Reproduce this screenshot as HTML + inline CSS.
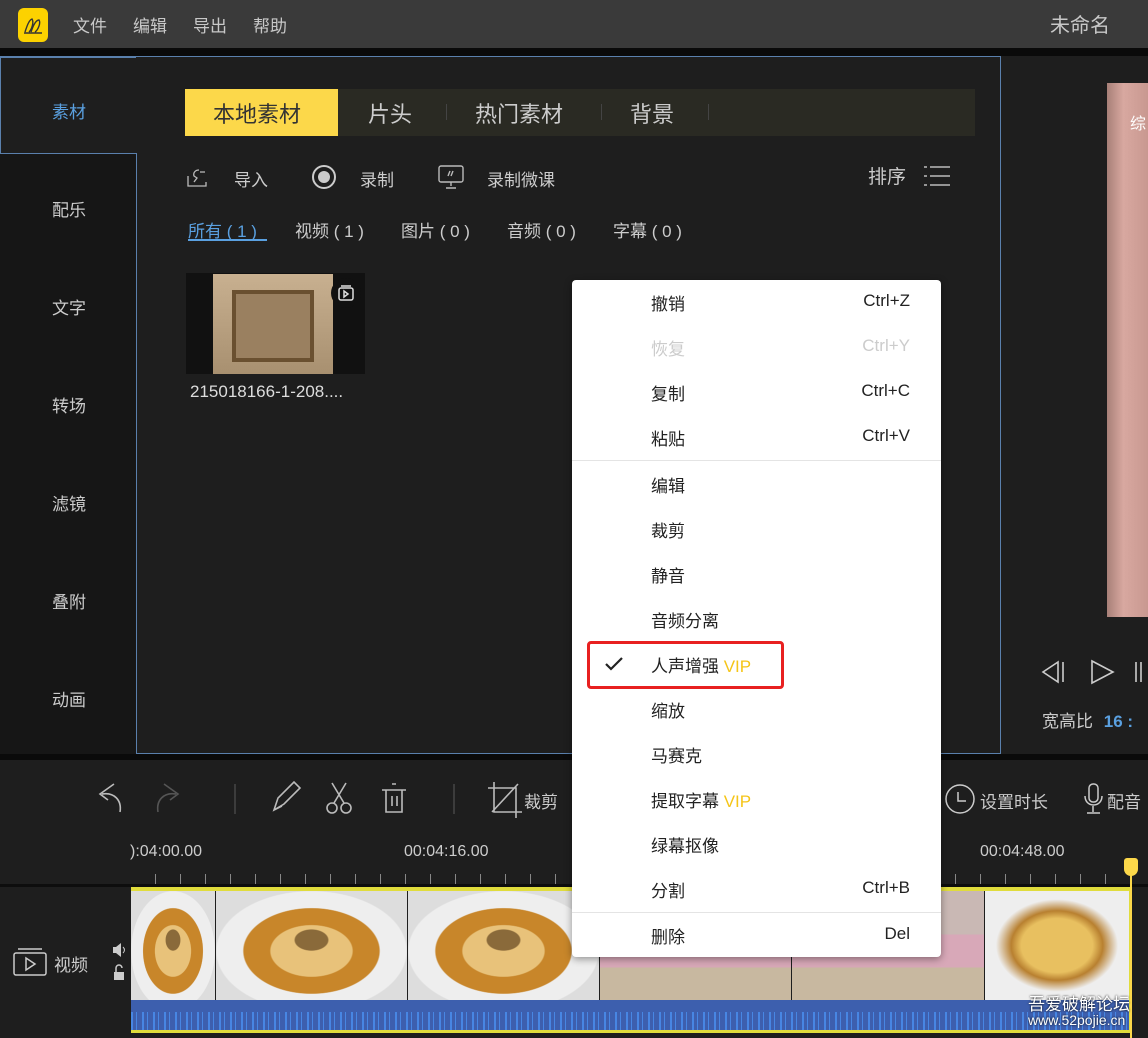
<!DOCTYPE html>
<html><head><meta charset="utf-8"><style>
*{margin:0;padding:0;box-sizing:border-box}
body{width:1148px;height:1038px;overflow:hidden;background:#1e1e1e;font-family:"Liberation Sans","Noto Sans CJK SC",sans-serif;position:relative;color:#ccc}
.a{position:absolute}
.t{position:absolute;white-space:nowrap}
.mi{position:absolute;left:651px;font-size:17px;color:#222}
.sc{position:absolute;right:238px;font-size:17px;color:#222}
.food{background:radial-gradient(ellipse at 50% 45%,#8a6a3a 0 12%,transparent 13%),radial-gradient(ellipse at 50% 55%,#e8c27a 0 30%,#c8862a 31% 50%,#eee 51% 70%,#ddd 71%);}
.ppl{background:linear-gradient(180deg,#c9b8b4 0 40%,#d8a8b8 40% 70%,#c8b8a0 70%);}
</style></head><body>
<div class="a" style="left:0;top:0;width:1148px;height:48px;background:#3a3a3a"></div>
<div class="a" style="left:0;top:48px;width:1148px;height:8px;background:#0a0a0a"></div>
<div class="a" style="left:18px;top:8px;width:30px;height:34px;background:#fcd200;border-radius:6px"></div>
<svg class="a" style="left:22px;top:14px" width="22" height="22" viewBox="0 0 22 22" fill="none" stroke="#333" stroke-width="1.4"><path d="M3 18c2-6 4-12 7-13 2 3 0 10-3 13M9 18c2-6 5-12 8-12 2 3-1 10-4 12M2 19h18"/></svg>
<div class="t" style="left:73px;top:12px;font-size:17px;color:#c8c8c8">文件</div>
<div class="t" style="left:133px;top:12px;font-size:17px;color:#c8c8c8">编辑</div>
<div class="t" style="left:193px;top:12px;font-size:17px;color:#c8c8c8">导出</div>
<div class="t" style="left:253px;top:12px;font-size:17px;color:#c8c8c8">帮助</div>
<div class="t" style="left:1050px;top:9px;font-size:20px;color:#c8c8c8">未命名</div>
<div class="a" style="left:0;top:56px;width:137px;height:698px;background:#161616"></div>
<div class="a" style="left:0;top:57px;width:137px;height:97px;background:#1e1e1e;border:1px solid #5a80ad;border-right:none"></div>
<div class="t" style="left:52px;top:98px;font-size:17px;color:#5aa0e0">素材</div>
<div class="t" style="left:52px;top:196px;font-size:17px;color:#ccc">配乐</div>
<div class="t" style="left:52px;top:294px;font-size:17px;color:#ccc">文字</div>
<div class="t" style="left:52px;top:392px;font-size:17px;color:#ccc">转场</div>
<div class="t" style="left:52px;top:490px;font-size:17px;color:#ccc">滤镜</div>
<div class="t" style="left:52px;top:588px;font-size:17px;color:#ccc">叠附</div>
<div class="t" style="left:52px;top:686px;font-size:17px;color:#ccc">动画</div>
<div class="a" style="left:136px;top:56px;width:865px;height:698px;background:#1e1e1e;border:1px solid #5a80ad;border-left:none"></div>
<div class="a" style="left:136px;top:153px;width:1px;height:601px;background:#5a80ad"></div>
<div class="a" style="left:0;top:56px;width:1001px;height:1px;background:#5a80ad"></div>
<div class="a" style="left:185px;top:89px;width:790px;height:47px;background:#2a2a23"></div>
<div class="a" style="left:185px;top:89px;width:153px;height:47px;background:#fcd84a"></div>
<div class="t" style="left:213px;top:97px;font-size:22px;color:#333">本地素材</div>
<div class="t" style="left:368px;top:97px;font-size:22px;color:#ccc">片头</div>
<div class="a" style="left:446px;top:104px;width:1px;height:16px;background:#444"></div>
<div class="t" style="left:475px;top:97px;font-size:22px;color:#ccc">热门素材</div>
<div class="a" style="left:601px;top:104px;width:1px;height:16px;background:#444"></div>
<div class="t" style="left:630px;top:97px;font-size:22px;color:#ccc">背景</div>
<div class="a" style="left:708px;top:104px;width:1px;height:16px;background:#444"></div>
<svg class="a" style="left:186px;top:166px" width="26" height="24" viewBox="0 0 26 24" fill="none" stroke="#bbb" stroke-width="1.3"><path d="M2 10v10h18V16M13 4c-4 0-6 3-5 6l3 2-3 4M14 6h5"/></svg>
<div class="t" style="left:234px;top:166px;font-size:17px;color:#ccc">导入</div>
<div class="a" style="left:312px;top:165px;width:24px;height:24px;border:2px solid #ccc;border-radius:50%"></div>
<div class="a" style="left:318px;top:171px;width:12px;height:12px;background:#ccc;border-radius:50%"></div>
<div class="t" style="left:360px;top:166px;font-size:17px;color:#ccc">录制</div>
<svg class="a" style="left:437px;top:164px" width="28" height="28" viewBox="0 0 28 28" fill="none" stroke="#bbb" stroke-width="1.4"><rect x="2" y="2" width="24" height="16" rx="2"/><path d="M14 18v4M9 24h10M13 7l-2 5M16 7l-2 5"/></svg>
<div class="t" style="left:487px;top:166px;font-size:17px;color:#ccc">录制微课</div>
<div class="t" style="left:868px;top:162px;font-size:19px;color:#ccc">排序</div>
<svg class="a" style="left:922px;top:164px" width="30" height="24" viewBox="0 0 30 24" stroke="#bbb" stroke-width="1.5"><path d="M8 3h20M8 12h20M8 21h20M2 3h3M2 12h3M2 21h3"/></svg>
<div class="t" style="left:188px;top:217px;font-size:17px;color:#5aa0e0">所有 ( 1 )</div>
<div class="a" style="left:188px;top:239px;width:79px;height:2px;background:#5aa0e0"></div>
<div class="t" style="left:295px;top:217px;font-size:17px;color:#ccc">视频 ( 1 )</div>
<div class="t" style="left:401px;top:217px;font-size:17px;color:#ccc">图片 ( 0 )</div>
<div class="t" style="left:507px;top:217px;font-size:17px;color:#ccc">音频 ( 0 )</div>
<div class="t" style="left:613px;top:217px;font-size:17px;color:#ccc">字幕 ( 0 )</div>
<div class="a" style="left:186px;top:273px;width:179px;height:101px;background:#111"></div>
<div class="a" style="left:213px;top:274px;width:120px;height:100px;background:linear-gradient(#c8b090,#a89070)"></div>
<div class="a" style="left:232px;top:290px;width:82px;height:72px;background:#9a8060;border:4px solid #6a5030"></div>
<div class="a" style="left:331px;top:278px;width:30px;height:30px;background:#111;border-radius:50%"></div>
<svg class="a" style="left:337px;top:284px" width="18" height="18" viewBox="0 0 18 18" fill="none" stroke="#ddd" stroke-width="1.5"><rect x="2" y="4" width="14" height="12" rx="2"/><path d="M4 2h10M7 7l4 3-4 3z"/></svg>
<div class="t" style="left:190px;top:382px;font-size:17px;color:#ddd">215018166-1-208....</div>
<div class="a" style="left:1007px;top:56px;width:141px;height:698px;background:#1e1e1e"></div>
<div class="a" style="left:1107px;top:83px;width:41px;height:534px;background:linear-gradient(90deg,#a88078,#d8a8a0 40%,#c89890)"></div>
<div class="t" style="left:1130px;top:110px;font-size:16px;color:#fff">综</div>
<svg class="a" style="left:1040px;top:658px" width="108" height="28" viewBox="0 0 108 28" fill="none" stroke="#ccc" stroke-width="1.6"><path d="M18 4L3 14l15 10zM23 4v20M52 3c0 0 0 22 0 22l21-11zM96 4v20M101 4v20"/></svg>
<div class="t" style="left:1042px;top:707px;font-size:17px;color:#ccc">宽高比 <b style="color:#5aa0e0;margin-left:6px">16 :</b></div>
<div class="a" style="left:0;top:754px;width:1148px;height:6px;background:#0a0a0a"></div>
<svg class="a" style="left:96px;top:780px" width="480" height="40" viewBox="0 0 480 40" fill="none" stroke="#bbb" stroke-width="1.6">
<path d="M18 4L4 14l8 6M6 14c12-2 20 6 18 18"/>
<path stroke="#555" d="M68 4l14 10-8 6M80 14c-12-2-20 6-18 18"/>
<path stroke="#444" d="M139 4v30"/>
<path d="M178 30l4-12 16-16 6 6-16 16zM178 30l8-4"/>
<circle cx="236" cy="28" r="5"/><circle cx="250" cy="28" r="5"/><path d="M238 23l12-20M248 23l-12-20"/>
<path d="M286 10h24M290 10v22h16V10M296 4h4M296 16v10M301 16v10"/>
<path stroke="#444" d="M358 4v30"/>
<path d="M398 2v30h28M392 8h28v30M396 32l26-28"/>
</svg>
<div class="t" style="left:524px;top:788px;font-size:17px;color:#ccc">裁剪</div>
<svg class="a" style="left:944px;top:783px" width="32" height="32" viewBox="0 0 32 32" fill="none" stroke="#ccc" stroke-width="1.5"><circle cx="16" cy="16" r="14"/><path d="M14 9v9h8"/></svg>
<div class="t" style="left:980px;top:788px;font-size:17px;color:#ccc">设置时长</div>
<svg class="a" style="left:1082px;top:782px" width="24" height="34" viewBox="0 0 24 34" fill="none" stroke="#ccc" stroke-width="1.5"><rect x="7" y="2" width="9" height="18" rx="4"/><path d="M3 14c0 12 17 12 17 0M11 24v6M5 31h13"/></svg>
<div class="t" style="left:1107px;top:788px;font-size:17px;color:#ccc">配音</div>
<div class="t" style="left:130px;top:843px;font-size:16px;color:#ccc">):04:00.00</div>
<div class="t" style="left:404px;top:843px;font-size:16px;color:#ccc">00:04:16.00</div>
<div class="t" style="left:980px;top:843px;font-size:16px;color:#ccc">00:04:48.00</div>
<div class="a" style="left:131px;top:874px;width:1017px;height:10px;background:repeating-linear-gradient(90deg,transparent 0 24px,#888 24px 25px)"></div>
<div class="a" style="left:0;top:884px;width:1148px;height:3px;background:#0d0d0d"></div>
<div class="a" style="left:131px;top:887px;width:1000px;height:146px;border:3px solid #e0dc3c;border-width:4px 2px 4px 0"></div>
<div class="a food" style="left:131px;top:891px;width:84px;height:109px"></div>
<div class="a food" style="left:216px;top:891px;width:191px;height:109px"></div>
<div class="a food" style="left:408px;top:891px;width:191px;height:109px"></div>
<div class="a ppl" style="left:600px;top:891px;width:191px;height:109px"></div>
<div class="a ppl" style="left:792px;top:891px;width:192px;height:109px"></div>
<div class="a" style="left:985px;top:891px;width:144px;height:109px;background:radial-gradient(ellipse at 50% 50%,#e8c060 0 35%,#b88030 45%,#eee 60%)"></div>
<div class="a" style="left:131px;top:1000px;width:998px;height:30px;background:#3d5fae"></div>
<div class="a" style="left:131px;top:1012px;width:998px;height:18px;background:repeating-linear-gradient(90deg,#4a90f0 0 2px,transparent 2px 5px,#4a90f0 5px 6px,transparent 6px 11px);opacity:.8"></div>
<div class="a" style="left:1124px;top:858px;width:14px;height:18px;background:#fcd84a;border-radius:3px 3px 7px 7px"></div>
<div class="a" style="left:1130px;top:874px;width:2px;height:164px;background:#fcd84a"></div>
<svg class="a" style="left:12px;top:947px" width="36" height="30" viewBox="0 0 36 30" fill="none" stroke="#ccc" stroke-width="1.5"><path d="M6 2h24"/><rect x="2" y="6" width="32" height="22" rx="2"/><path d="M14 11v12l9-6z"/></svg>
<div class="t" style="left:54px;top:951px;font-size:17px;color:#ccc">视频</div>
<svg class="a" style="left:112px;top:942px" width="16" height="40" viewBox="0 0 16 40" fill="#ccc"><path d="M1 5h3l5-4v14l-5-4H1z"/><path d="M11 5c2 2 2 4 0 6" stroke="#ccc" fill="none"/><rect x="2" y="30" width="10" height="8"/><path d="M4 30v-4a3 3 0 0 1 6 0" stroke="#ccc" fill="none" stroke-width="1.5"/></svg>
<div class="t" style="left:1028px;top:990px;font-size:17px;color:#fff;text-shadow:0 0 2px #000">吾爱破解论坛</div>
<div class="t" style="left:1028px;top:1012px;font-size:14px;color:#fff;text-shadow:0 0 2px #000">www.52pojie.cn</div>
<div class="a" style="left:572px;top:280px;width:369px;height:677px;background:#fff;border-radius:4px;box-shadow:0 2px 8px rgba(0,0,0,.4)"></div>
<div class="a" style="left:572px;top:460px;width:369px;height:1px;background:#e4e4e4"></div>
<div class="a" style="left:572px;top:912px;width:369px;height:1px;background:#e4e4e4"></div>
<div class="mi" style="top:290px">撤销</div><div class="sc" style="top:291px">Ctrl+Z</div>
<div class="mi" style="top:335px;color:#ccc">恢复</div><div class="sc" style="top:336px;color:#ccc">Ctrl+Y</div>
<div class="mi" style="top:380px">复制</div><div class="sc" style="top:381px">Ctrl+C</div>
<div class="mi" style="top:425px">粘贴</div><div class="sc" style="top:426px">Ctrl+V</div>
<div class="mi" style="top:472px">编辑</div>
<div class="mi" style="top:517px">裁剪</div>
<div class="mi" style="top:562px">静音</div>
<div class="mi" style="top:607px">音频分离</div>
<div class="mi" style="top:652px">人声增强<span style="color:#f5c518"> VIP</span></div>
<svg class="a" style="left:604px;top:656px" width="20" height="16" viewBox="0 0 20 16" fill="none" stroke="#222" stroke-width="2.2"><path d="M2 8l5 5L18 2"/></svg>
<div class="a" style="left:587px;top:641px;width:197px;height:48px;border:3px solid #e82020;border-radius:4px"></div>
<div class="mi" style="top:697px">缩放</div>
<div class="mi" style="top:742px">马赛克</div>
<div class="mi" style="top:787px">提取字幕<span style="color:#f5c518"> VIP</span></div>
<div class="mi" style="top:832px">绿幕抠像</div>
<div class="mi" style="top:877px">分割</div><div class="sc" style="top:878px">Ctrl+B</div>
<div class="mi" style="top:923px">删除</div><div class="sc" style="top:924px">Del</div>
</body></html>
